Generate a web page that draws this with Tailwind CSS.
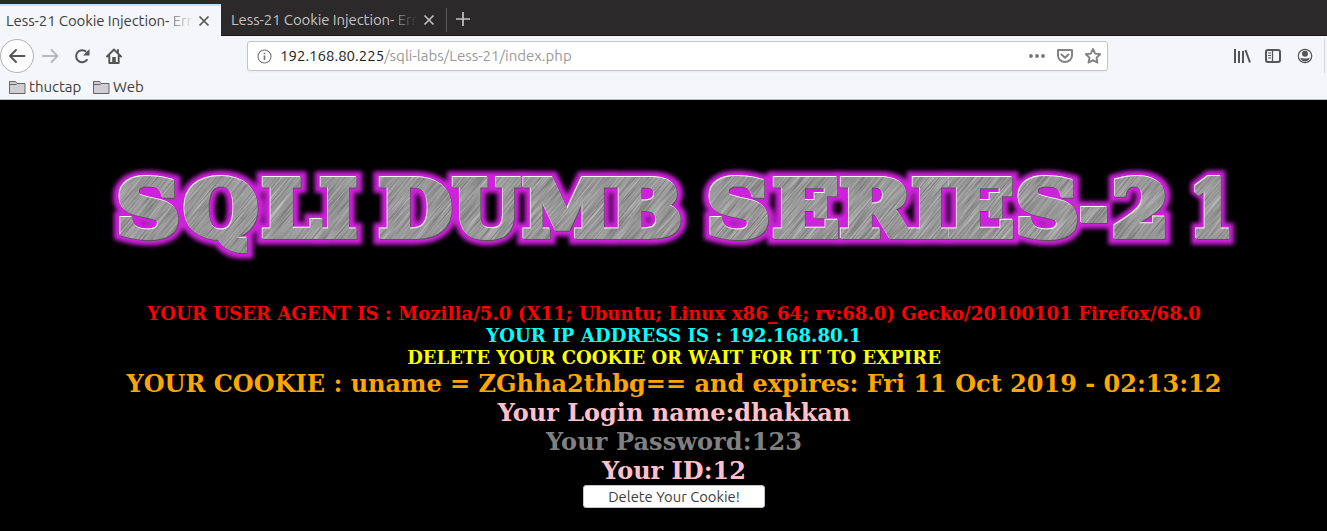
<!DOCTYPE html>
<html lang="en">
<head>
<meta charset="utf-8">
<title>Less-21 Cookie Injection- Error Based</title>
<script src="https://cdn.jsdelivr.net/npm/@tailwindcss/browser@4"></script>
</head>
<body class="w-[1327px] h-[531px] overflow-hidden bg-black font-['Ubuntu','Noto_Sans',sans-serif] text-[15px] text-[#3d3d3d]">
<header class="flex h-9 items-end bg-[#2b292a] text-[#c4c2c1]">
  <div class="flex h-8 w-[221px] items-center border-t-2 border-[#b9e6fb] bg-[#f5f6f9] pl-1.5 text-[#3d3d3d]">
    <div class="w-[187px] overflow-hidden whitespace-nowrap leading-5 tracking-[-0.1px]">Less-21 Cookie Injection- <span class="bg-linear-to-r from-[#888] to-[#e5e6e9] bg-clip-text text-transparent">Err</span></div>
    <svg class="ml-[5px]" width="12" height="12" viewBox="0 0 12 12" stroke="#555" stroke-width="1.7" fill="none"><path d="M1.500 1.500l9 9M10.500 1.500l-9 9"/></svg>
  </div>
  <div class="flex h-8 w-[225px] items-center border-b border-[#151515] pt-px pl-2.5">
    <div class="w-[187px] overflow-hidden whitespace-nowrap leading-5 tracking-[-0.1px]">Less-21 Cookie Injection- <span class="bg-linear-to-r from-[#888] to-[#353334] bg-clip-text text-transparent">Err</span></div>
    <svg class="ml-[5px]" width="12" height="12" viewBox="0 0 12 12" stroke="#c4c2c1" stroke-width="1.6" fill="none"><path d="M1.500 1.500l9 9M10.500 1.500l-9 9"/></svg>
  </div>
  <div class="flex h-8 flex-1 items-center border-b border-[#151515]">
    <div class="h-6 w-px bg-[#5d5b5c]"></div>
    <svg class="-mt-0.5 ml-[9px]" width="14" height="14" viewBox="0 0 14 14" stroke="#c4c2c1" stroke-width="1.7" fill="none"><path d="M7 0v14M0 7h14"/></svg>
  </div>
</header>
<nav class="h-16 border-b border-[#bfc1c6] bg-[#f5f6f9]">
  <div class="flex h-10 items-center">
    <div class="flex w-[247px] items-center">
      <svg width="130" height="36" viewBox="0 0 130 36" fill="none" stroke="#555" stroke-width="2" stroke-linecap="round" stroke-linejoin="round">
        <circle cx="17" cy="18" r="16.500" fill="#fdfdfe" stroke="#b3b3b6" stroke-width="1"/>
        <path d="M24.500 18H10M16 12l-6 6 6 6"/>
        <path stroke="#b7b8bb" d="M43 18h14M51.500 12l6 6-6 6"/>
        <path d="M87.300 21.200A6 6 0 1 1 86.200 13.800" stroke-linecap="butt"/>
        <path d="M89.500 11v6.500H83z" fill="#555" stroke="none"/>
        <path d="M107 18.500l7-7 7 7M109.300 17.500v7.500h9.400v-7.500M118 12v2" stroke-width="1.900"/>
        <path d="M112.200 24.500v-5.500h3.600v5.500z" fill="#555" stroke="none"/>
      </svg>
    </div>
    <div class="flex h-[30px] w-[861px] items-center rounded-[3px] border border-[#c3c5ca] bg-white pl-[9px] shadow-xs">
      <svg width="15" height="15" viewBox="0 0 15 15" fill="none" stroke="#737373"><circle cx="7.500" cy="7.500" r="6.500" stroke-width="1.100"/><path d="M7.500 6.500v4.500M7.500 3.700v1.600" stroke-width="1.700"/></svg>
      <div class="mt-px ml-2 flex-1 whitespace-nowrap text-[#999]"><span class="text-[#222]">192.168.80.225</span>/sqli-labs/Less-21/index.php</div>
      <svg class="-mr-px" width="84" height="20" viewBox="0 0 84 20" fill="none" stroke="#838383" stroke-width="2" stroke-linejoin="round" stroke-linecap="round">
        <g fill="#777" stroke="none"><circle cx="7" cy="10" r="1.900"/><circle cx="13" cy="10" r="1.900"/><circle cx="19" cy="10" r="1.900"/></g>
        <path d="M34 4h14v5.500a7 6.500 0 0 1-14 0z"/><path d="M37.500 8.500l3.500 3.300 3.500-3.300"/>
        <path stroke-width="1.900" d="M69 3l2.200 4.600 5 .6-3.700 3.400 1 5-4.500-2.500-4.500 2.500 1-5-3.700-3.400 5-.6z"/>
      </svg>
    </div>
    <svg class="ml-[120px]" width="99" height="34" viewBox="0 0 99 34" fill="none" stroke="#555" stroke-width="2">
      <path d="M7 10v14M11 12v12M15 12v12M17.500 11l4.500 12.500"/>
      <rect x="38" y="11" width="14" height="12" rx="2"/><path d="M44.500 11v12" stroke-width="1.300"/><path d="M40 14h3M40 16.500h3M40 19h3" stroke-width="1"/>
      <circle cx="77" cy="17" r="6.700" stroke-width="1.200"/><g fill="#555" stroke="none"><circle cx="77" cy="14.800" r="3"/><path d="M72.300 18.800c1.500 1 7.900 1 9.400 0-.4 2.300-2.500 3.600-4.700 3.600s-4.300-1.300-4.700-3.600z"/></g>
      <path d="M96.500 0v34" stroke="#d5d6da" stroke-width="1"/>
    </svg>
  </div>
  <div class="flex h-[22px] items-center pl-[9px] leading-5">
    <svg width="17" height="15" viewBox="0 0 17 15" fill="#d0ced1" stroke="#666"><path d="M.5 13.500v-12h6l1.500 2h8v10zM.5 4.500h7"/></svg>
    <span class="ml-[3px] w-[64px]">thuctap</span>
    <svg width="17" height="15" viewBox="0 0 17 15" fill="#d0ced1" stroke="#666"><path d="M.5 13.500v-12h6l1.500 2h8v10zM.5 4.500h7"/></svg>
    <span class="ml-[3px]">Web</span>
  </div>
</nav>
<main class="bg-black">
  <svg class="block" width="1327" height="203" viewBox="0 100 1327 203">
    <defs>
      <g id="title" font-family="DejaVu Serif" font-weight="bold" font-size="76" stroke-linejoin="miter" stroke-miterlimit="2">
        <text y="236"><tspan x="117" textLength="63" lengthAdjust="spacingAndGlyphs">S</tspan><tspan x="184" textLength="74" lengthAdjust="spacingAndGlyphs">Q</tspan><tspan x="262" textLength="59" lengthAdjust="spacingAndGlyphs">L</tspan><tspan x="320" textLength="37" lengthAdjust="spacingAndGlyphs">I</tspan></text>
        <text y="236"><tspan x="379" textLength="73" lengthAdjust="spacingAndGlyphs">D</tspan><tspan x="453" textLength="67" lengthAdjust="spacingAndGlyphs">U</tspan><tspan x="523" textLength="89" lengthAdjust="spacingAndGlyphs">M</tspan><tspan x="610" textLength="72" lengthAdjust="spacingAndGlyphs">B</tspan></text>
        <text y="236"><tspan x="707" textLength="63" lengthAdjust="spacingAndGlyphs">S</tspan><tspan x="773" textLength="66" lengthAdjust="spacingAndGlyphs">E</tspan><tspan x="840" textLength="72" lengthAdjust="spacingAndGlyphs">R</tspan><tspan x="912" textLength="37" lengthAdjust="spacingAndGlyphs">I</tspan><tspan x="948" textLength="66" lengthAdjust="spacingAndGlyphs">E</tspan><tspan x="1016" textLength="63" lengthAdjust="spacingAndGlyphs">S</tspan><tspan x="1080" textLength="28" lengthAdjust="spacingAndGlyphs">-</tspan><tspan x="1112" textLength="57" lengthAdjust="spacingAndGlyphs">2</tspan></text>
        <text y="236"><tspan x="1190" textLength="43" lengthAdjust="spacingAndGlyphs">1</tspan></text>
      </g>
      <filter id="blur" x="-5%" y="-30%" width="110%" height="160%"><feGaussianBlur stdDeviation="1.900"/></filter>
      <filter id="brush" x="0" y="0" width="100%" height="100%" color-interpolation-filters="sRGB">
        <feTurbulence type="fractalNoise" baseFrequency="0.025 0.8" numOctaves="2" seed="4"/>
        <feColorMatrix values="0.45 0 0 0 0.37  0.45 0 0 0 0.37  0.45 0 0 0 0.37  0 0 0 0 1"/>
      </filter>
      <mask id="letters" maskUnits="userSpaceOnUse" x="100" y="160" width="1150" height="110"><use href="#title" fill="#fff" stroke="#fff" stroke-width="6"/></mask>
    </defs>
    <use href="#title" fill="#cf22dc" stroke="#cf22dc" stroke-width="17" filter="url(#blur)"/>
    <use href="#title" x="0.700" y="0.700" fill="#555" stroke="#555" stroke-width="6"/>
    <use href="#title" x="-0.700" y="-0.700" fill="#fff" stroke="#fff" stroke-width="6"/>
    <g mask="url(#letters)"><g transform="rotate(-50 670 210)"><rect x="0" y="-450" width="1340" height="1300" filter="url(#brush)"/></g></g>
  </svg>
  <div class="flex flex-col items-center whitespace-nowrap pl-[21px] text-center font-['DejaVu_Serif',serif] font-bold">
    <div class="text-[18px] leading-[22px]">
      <p class="tracking-[0.1px] text-[red]">YOUR USER AGENT IS : Mozilla/5.0 (X11; Ubuntu; Linux x86_64; rv:68.0) Gecko/20100101 Firefox/68.0</p>
      <p class="tracking-[0.12px] text-[cyan]">YOUR IP ADDRESS IS : 192.168.80.1</p>
      <p class="text-[yellow]">DELETE YOUR COOKIE OR WAIT FOR IT TO EXPIRE</p>
    </div>
    <div class="text-[24px] leading-[29px]">
      <p class="text-[orange]">YOUR COOKIE : uname = ZGhha2thbg== and expires: Fri 11 Oct 2019 - 02:13:12</p>
      <p class="text-[pink]">Your Login name:dhakkan</p>
      <p class="tracking-[0.1px] text-[gray]">Your Password:123</p>
      <p class="text-[pink]">Your ID:12</p>
    </div>
    <button class="h-[23px] w-[182px] rounded-[3px] border border-[#c3c5ca] bg-white font-['Ubuntu','Noto_Sans',sans-serif] text-[14.8px] leading-5 font-normal text-[#3d3d3d]">Delete Your Cookie!</button>
  </div>
</main>
</body>
</html>
